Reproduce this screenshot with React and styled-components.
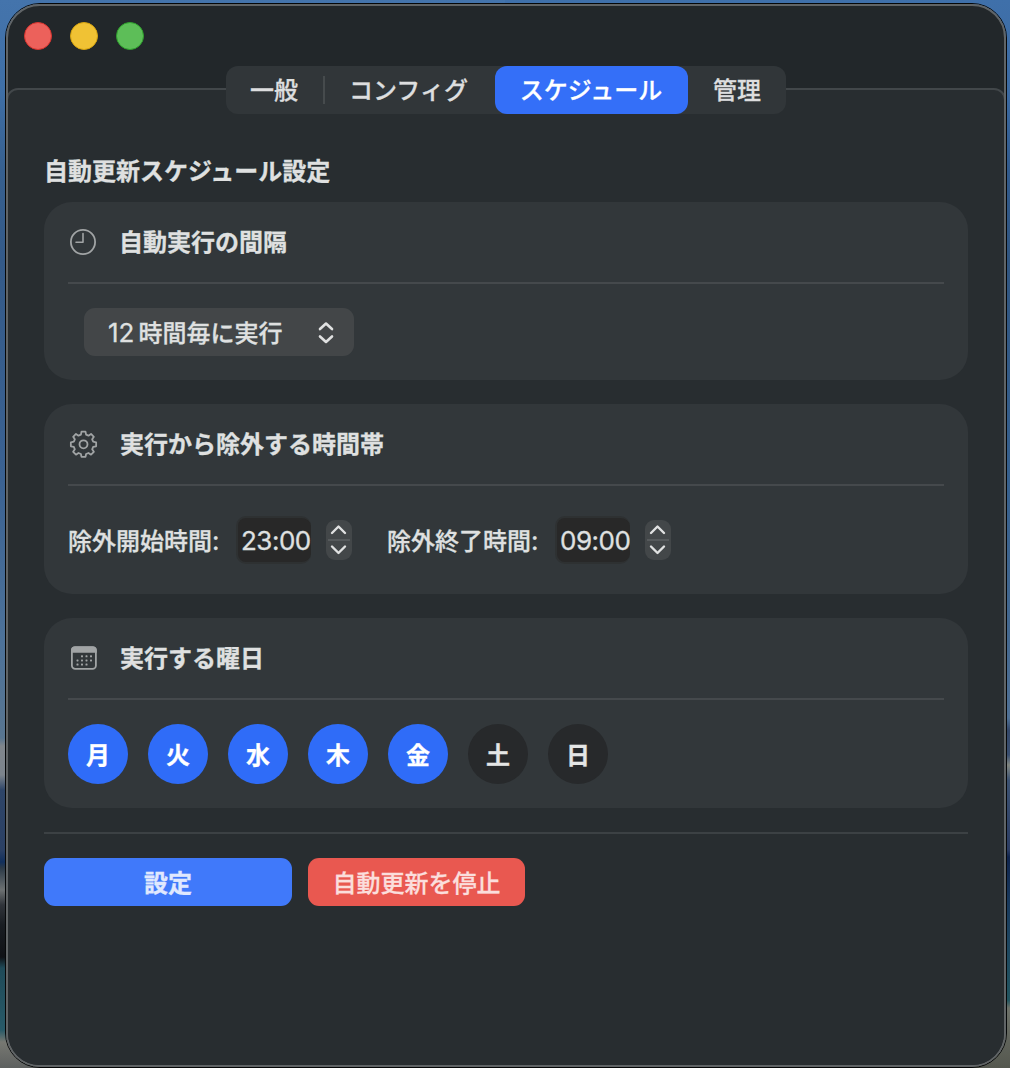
import React, { useState } from "react";
import styled, { createGlobalStyle } from "styled-components";

const GlobalStyle = createGlobalStyle`
  * { box-sizing: border-box; }
  body { margin: 0; overflow: hidden; }
  button { border: 0; padding: 0; margin: 0; font: inherit; color: inherit; }
`;

const Desktop = styled.div`
  height: 1068px;
  padding: 3px 3px 0 5px;
  overflow: hidden;
  font: 500 24px/1 "Noto Sans CJK JP", sans-serif;
  -webkit-text-stroke: 0.3px currentColor;
  color: #dfe0e0;
  background:
    linear-gradient(#4474ac, #3f6fa6 90px, #37608f 170px, #345a88 260px, #3b6292 480px, #4d7299 640px, #587590 738px,
      #80868c 746px, #7c848c 775px, #2e4568 790px, #2b4064 850px, #112f5c 862px, #2c3a48 868px, #6d7172 890px, #30343a 905px,
      #191d22 925px, #101216 957px, #1f4a58 968px, #285a68 1030px, #777872 1042px, #5d605f 1068px) left / 505px 100% no-repeat,
    linear-gradient(#3f70aa, #3b6aa2 90px, #315a8c 170px, #305580 260px, #36608e 480px, #44688f 640px, #4f7095 718px,
      #34486a 730px, #3a4f70 755px, #80857f 765px, #3c5272 780px, #2b3c62 850px, #10254e 857px, #18385c 900px,
      #1d4560 940px, #22555f 1000px, #6c7068 1008px, #55584f 1068px) right / 505px 100% no-repeat;
`;

const Window = styled.main`
  width: 1002px;
  height: 1065px;
  border: 1px solid #050708;
  border-radius: 35px;
  display: flex;
`;

const Frame = styled.div`
  flex: 1;
  display: flex;
  flex-direction: column;
  border: 2px solid #606466;
  border-radius: 34px;
  overflow: hidden;
  background: #22272a;
`;

const TitleBar = styled.header`
  flex: none;
  height: 60px;
  padding: 16px;
  display: flex;
  gap: 18px;
`;

const TrafficLight = styled.span`
  width: 28px;
  height: 28px;
  border-radius: 50%;
  background: ${(p) => p.$fill};
  border: 1px solid ${(p) => p.$edge};
`;

const TabBar = styled.nav`
  flex: none;
  width: 560px;
  height: 48px;
  margin-left: 218px;
  display: flex;
  align-items: center;
  border-radius: 12px;
  background: #313639;
  position: relative;
  z-index: 1;
`;

const Tab = styled.button`
  width: ${(p) => p.$width}px;
  height: 48px;
  border-radius: 12px;
  padding: 0 ${(p) => p.$shift || 0}px 2px 0;
  background: ${(p) => (p.$active ? "#346ff8" : "transparent")};
  color: ${(p) => (p.$active ? "#fff" : "#dddedf")};
`;

const TabDivider = styled.span`
  width: 2px;
  height: 28px;
  background: #464b4d;
`;

const Pane = styled.section`
  flex: 1;
  margin: -26px -2px -2px;
  padding: 68px 36px 0;
  border: 2px solid #42474a;
  border-radius: 12px 12px 0 0;
  background: #282d30;
`;

const Heading = styled.h1`
  height: 24px;
  margin: 0;
  font-size: 24px;
  line-height: 24px;
  font-weight: 700;
`;

const CardStack = styled.div`
  margin-top: 20px;
  display: flex;
  flex-direction: column;
  gap: 24px;
`;

const Card = styled.section`
  height: ${(p) => p.$height}px;
  padding: 0 24px;
  border-radius: 28px;
  background: #32373a;
`;

const CardHeader = styled.header`
  height: 82px;
  border-bottom: 2px solid #45494c;
  display: flex;
  align-items: center;
  gap: ${(p) => p.$gap || 21}px;
  svg { flex: none; }
`;

const CardTitle = styled.h2`
  margin: 0;
  padding-bottom: 2px;
  font-size: 24px;
  line-height: 24px;
  font-weight: 700;
`;

const Select = styled.button`
  width: 270px;
  height: 48px;
  margin: 24px 0 0 16px;
  padding: 1px 19px 0 24px;
  display: flex;
  align-items: center;
  justify-content: space-between;
  border-radius: 11px;
  background: #434648;
`;

const Digits = styled.span`
  font-family: Inter, sans-serif;
  font-size: 26px;
  font-weight: 400;
  letter-spacing: ${(p) => p.$tracking || 0}px;
  margin-right: ${(p) => p.$after || 0}px;
`;

const TimeRow = styled.div`
  height: 108px;
  display: flex;
  align-items: center;
  gap: 35px;
`;

const TimeField = styled.div`
  display: flex;
  align-items: center;
`;

const Label = styled.span`
  width: 168px;
  padding-top: 1px;
  white-space: nowrap;
`;

const TimeInput = styled.span`
  width: 75px;
  height: 48px;
  padding: 2px 0 0 3px;
  display: flex;
  align-items: center;
  overflow: hidden;
  white-space: nowrap;
  border: 2px solid #2e3132;
  border-right-width: 0;
  border-radius: 10px;
  background: #282828;
`;

const Stepper = styled.span`
  width: 26px;
  height: 40px;
  margin-left: 15px;
  border-radius: 9px;
  background: #434749;
  display: flex;
`;

const DayRow = styled.div`
  padding-top: 24px;
  display: flex;
  gap: 20px;
`;

const Day = styled.button`
  width: 60px;
  height: 60px;
  border-radius: 50%;
  font-weight: 700;
  color: ${(p) => (p.$on ? "#fff" : "#e4e5e5")};
  background: ${(p) => (p.$on ? "#2f6cf8" : "#27292b")};
`;

const Actions = styled.footer`
  margin-top: 24px;
  padding-top: 24px;
  border-top: 2px solid #3c4144;
  display: flex;
  gap: 16px;
`;

const ActionButton = styled.button`
  width: ${(p) => p.$width}px;
  height: 48px;
  padding-bottom: 1px;
  border-radius: 11px;
  font-weight: ${(p) => p.$weight};
  color: ${(p) => p.$ink};
  background: ${(p) => p.$fill};
`;

const ClockIcon = () => (
  <svg width="30" height="30" viewBox="0 0 30 30" fill="none" stroke="#a1a4a5" strokeWidth="1.8">
    <circle cx="15" cy="15" r="12.1" />
    <path d="M15 6.5V15.3H8" strokeWidth="1.6" strokeLinecap="round" strokeLinejoin="round" />
  </svg>
);

const gearPath = (() => {
  const pts = [];
  const at = (r, deg) => {
    const a = (deg * Math.PI) / 180;
    return `${(15.5 + r * Math.sin(a)).toFixed(2)} ${(15.3 - r * Math.cos(a)).toFixed(2)}`;
  };
  for (let i = 0; i < 8; i++) {
    const c = i * 45;
    pts.push(at(10, c - 15), at(12.8, c - 9), at(12.8, c + 9), at(10, c + 15));
  }
  return `M${pts.join("L")}Z`;
})();

const GearIcon = () => (
  <svg width="31" height="30" viewBox="0 0 31 30" fill="none" stroke="#a1a4a5" strokeWidth="1.8" strokeLinejoin="round">
    <path d={gearPath} />
    <circle cx="15.5" cy="15.3" r="4" />
  </svg>
);

const CalendarIcon = () => (
  <svg width="31" height="30" viewBox="0 0 31 30">
    <rect x="3.9" y="4.1" width="24" height="21.8" rx="3.4" fill="none" stroke="#a1a4a5" strokeWidth="1.8" />
    <path d="M3 9.8V7a3.6 3.6 0 0 1 3.6-3.6h18.600A3.600 3.600 0 0 1 28.800 7v2.800Z" fill="#a1a4a5" />
    <g fill="#a1a4a5">
      {[[13, 12.3], [17.5, 12.3], [22, 12.3], [8.5, 16.4], [13, 16.4], [17.5, 16.4], [22, 16.4], [8.5, 20.5], [13, 20.5], [17.5, 20.5]].map(
        ([x, y]) => <rect key={`${x}-${y}`} x={x} y={y} width="2" height="2" rx=".6" />
      )}
    </g>
  </svg>
);

const UpDownIcon = () => (
  <svg width="18" height="24" viewBox="0 0 18 24" fill="none" stroke="#e0e1e1" strokeWidth="2.6" strokeLinecap="round" strokeLinejoin="round">
    <path d="M3 8L9 2.500L15 8M3 15.500L9 21L15 15.500" />
  </svg>
);

const StepperIcon = () => (
  <svg width="26" height="40" viewBox="0 0 26 40" fill="none" stroke="#e0e1e1" strokeWidth="2.4" strokeLinecap="round" strokeLinejoin="round">
    <path d="M2 20H24" stroke="#565a5c" strokeWidth="2" strokeLinecap="butt" />
    <path d="M6 13L12.500 6.500L19 13M6 26.500L12.500 33L19 26.500" />
  </svg>
);

function Time({ label, value }) {
  return (
    <TimeField>
      <Label>{label}<Digits>:</Digits></Label>
      <TimeInput><Digits $tracking={-0.5}>{value}</Digits></TimeInput>
      <Stepper><StepperIcon /></Stepper>
    </TimeField>
  );
}

export default function App() {
  const [days, setDays] = useState({ 月: true, 火: true, 水: true, 木: true, 金: true, 土: false, 日: false });
  const toggle = (d) => setDays((prev) => ({ ...prev, [d]: !prev[d] }));

  return (
    <Desktop>
      <GlobalStyle />
      <Window>
        <Frame>
          <TitleBar>
            <TrafficLight $fill="#ec615b" $edge="#d8342f" />
            <TrafficLight $fill="#f0c234" $edge="#d7a40f" />
            <TrafficLight $fill="#5dbe58" $edge="#2ea12c" />
          </TitleBar>
          <TabBar>
            <Tab $width={97} $shift={1}>一般</Tab>
            <TabDivider />
            <Tab $width={170} $shift={3}>コンフィグ</Tab>
            <Tab $width={193} $active $shift={1}>スケジュール</Tab>
            <Tab $width={98}>管理</Tab>
          </TabBar>
          <Pane>
            <Heading>自動更新スケジュール設定</Heading>
            <CardStack>
              <Card $height={178}>
                <CardHeader><ClockIcon /><CardTitle>自動実行の間隔</CardTitle></CardHeader>
                <Select>
                  <span><Digits $after={4}>12</Digits>時間毎に実行</span>
                  <UpDownIcon />
                </Select>
              </Card>
              <Card $height={190}>
                <CardHeader><GearIcon /><CardTitle>実行から除外する時間帯</CardTitle></CardHeader>
                <TimeRow>
                  <Time label="除外開始時間" value="23:00" />
                  <Time label="除外終了時間" value="09:00" />
                </TimeRow>
              </Card>
              <Card $height={190}>
                <CardHeader><CalendarIcon /><CardTitle>実行する曜日</CardTitle></CardHeader>
                <DayRow>
                  {Object.keys(days).map((d) => (
                    <Day key={d} $on={days[d]} onClick={() => toggle(d)}>{d}</Day>
                  ))}
                </DayRow>
              </Card>
            </CardStack>
            <Actions>
              <ActionButton $width={248} $weight={700} $ink="#e0e8fe" $fill="#4079fa">設定</ActionButton>
              <ActionButton $width={217} $weight={500} $ink="#fbdedc" $fill="#e95850">自動更新を停止</ActionButton>
            </Actions>
          </Pane>
        </Frame>
      </Window>
    </Desktop>
  );
}
